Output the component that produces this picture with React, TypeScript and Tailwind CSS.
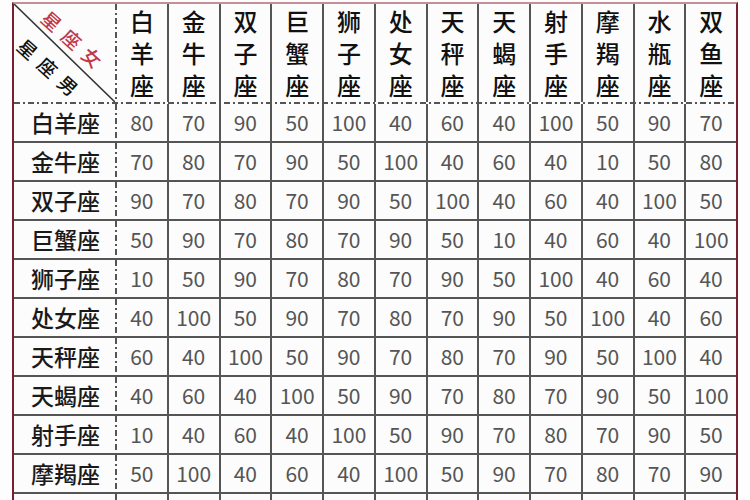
import React from "react";

const signs = ["白羊座", "金牛座", "双子座", "巨蟹座", "狮子座", "处女座", "天秤座", "天蝎座", "射手座", "摩羯座", "水瓶座", "双鱼座"];

const data: number[][] = [
  [80, 70, 90, 50, 100, 40, 60, 40, 100, 50, 90, 70],
  [70, 80, 70, 90, 50, 100, 40, 60, 40, 10, 50, 80],
  [90, 70, 80, 70, 90, 50, 100, 40, 60, 40, 100, 50],
  [50, 90, 70, 80, 70, 90, 50, 10, 40, 60, 40, 100],
  [10, 50, 90, 70, 80, 70, 90, 50, 100, 40, 60, 40],
  [40, 100, 50, 90, 70, 80, 70, 90, 50, 100, 40, 60],
  [60, 40, 100, 50, 90, 70, 80, 70, 90, 50, 100, 40],
  [40, 60, 40, 100, 50, 90, 70, 80, 70, 90, 50, 100],
  [10, 40, 60, 40, 100, 50, 90, 70, 80, 70, 90, 50],
  [50, 100, 40, 60, 40, 100, 50, 90, 70, 80, 70, 90],
  [90, 50, 100, 40, 60, 40, 100, 50, 90, 70, 80, 70],
  [70, 90, 50, 100, 40, 60, 40, 100, 50, 90, 70, 80],
];

const font = { fontFamily: '"Noto Sans CJK SC", "Noto Sans", sans-serif' };

function VDash() {
  return (
    <div className="w-[2px] shrink-0 self-stretch bg-[repeating-linear-gradient(180deg,#555_0_6px,transparent_6px_9px,#555_9px_11px,transparent_11px_14px)]" />
  );
}

function DiagLabel({ text, color, x, y }: { text: string; color: string; x: number; y: number }) {
  return (
    <div
      className="absolute flex gap-[8px] text-[19px] leading-[20px] font-medium whitespace-nowrap"
      style={{ ...font, color, left: x, top: y, transform: "translate(-50%,-50%) rotate(42deg)" }}
    >
      {text.split("").map((c, i) => (
        <span key={i}>{c}</span>
      ))}
    </div>
  );
}

function Corner() {
  return (
    <div className="relative w-[101px] shrink-0 self-stretch">
      <svg className="absolute inset-0" width="101" height="98" viewBox="0 0 101 98">
        <line x1="0" y1="0" x2="101" y2="98" stroke="#333" strokeWidth="1.6" />
      </svg>
      <DiagLabel text="星座女" color="#c0394b" x={58} y={35} />
      <DiagLabel text="星座男" color="#111" x={34} y={63} />
    </div>
  );
}

export default function App() {
  return (
    <div className="w-[750px] h-[500px] overflow-hidden bg-[#fdfdfd] pl-[12px] pt-[2px]" style={font}>
      <div className="w-[726px] border-t-2 border-l-2 border-r-2 border-t-[#c58f98] border-l-[#7a1f2e] border-r-[#7a1f2e] bg-[#fcfcfc]">
        <div className="flex h-[98px]">
          <Corner />
          <VDash />
          {signs.map((s, i) => (
            <div
              key={s}
              className={`flex-1 flex flex-col items-center justify-center text-[24px] leading-[32px] font-medium text-[#111] ${i < 11 ? "border-r-2 border-[#555]" : ""}`}
            >
              {s.split("").map((c, j) => (
                <span key={j}>{c}</span>
              ))}
            </div>
          ))}
        </div>
        <div className="h-[2px] bg-[repeating-linear-gradient(90deg,#555_0_6px,transparent_6px_9px,#555_9px_11px,transparent_11px_14px)]" />
        {data.map((row, r) => (
          <div key={r} className="flex h-[39px] border-b-2 border-[#555]">
            <div className="w-[101px] shrink-0 flex items-center justify-center text-[23px] font-medium text-[#1a1a1a] leading-none pl-[2px]">
              {signs[r]}
            </div>
            <VDash />
            {row.map((v, i) => (
              <div
                key={i}
                className={`flex-1 flex items-center justify-center text-[21px] text-[#555] leading-none ${i < 11 ? "border-r-2 border-[#555]" : ""}`}
              >
                {v}
              </div>
            ))}
          </div>
        ))}
      </div>
    </div>
  );
}
